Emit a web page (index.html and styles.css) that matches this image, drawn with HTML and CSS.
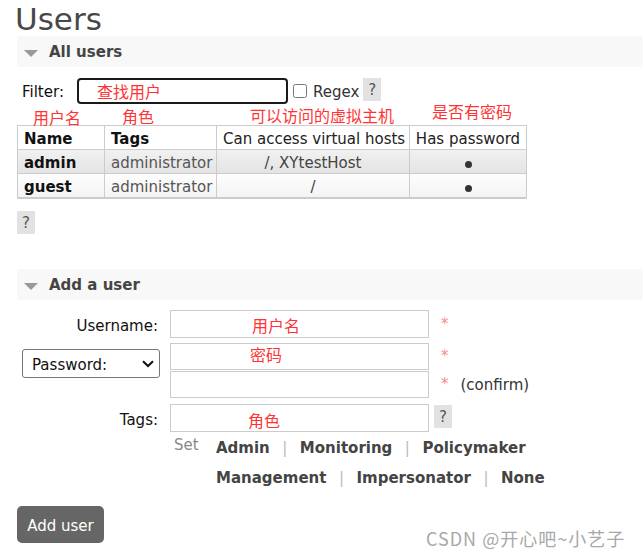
FILE: index.html
```html
<!DOCTYPE html>
<html>
<head>
<meta charset="utf-8">
<title>Users</title>
<link rel="stylesheet" href="styles.css">
</head>
<body>
<div class="page">
  <h1 class="title">Users</h1>

  <section class="section">
    <h2 class="section-head"><span class="tri"></span>All users</h2>
    <div class="filter-row">
      <span class="filter-label">Filter:</span>
      <input class="filter-input" type="text">
      <input class="check" type="checkbox">
      <span class="regex">Regex</span>
      <span class="help help-filter">?</span>
    </div>

    <table class="list">
      <colgroup>
        <col class="col-name"><col class="col-tags"><col class="col-vhosts"><col class="col-pass">
      </colgroup>
      <thead>
        <tr>
          <th class="strong">Name</th>
          <th class="strong">Tags</th>
          <th>Can access virtual hosts</th>
          <th class="center tight">Has password</th>
        </tr>
      </thead>
      <tbody>
        <tr class="row-odd">
          <td class="strong">admin</td>
          <td class="tags">administrator</td>
          <td class="center muted">/, XYtestHost</td>
          <td class="center"><span class="dot"></span></td>
        </tr>
        <tr class="row-even">
          <td class="strong">guest</td>
          <td class="tags">administrator</td>
          <td class="center muted">/</td>
          <td class="center"><span class="dot"></span></td>
        </tr>
      </tbody>
    </table>
    <div class="help-line"><span class="help">?</span></div>
  </section>

  <section class="section section-add">
    <h2 class="section-head"><span class="tri"></span>Add a user</h2>
    <div class="form">
      <div class="form-row">
        <label class="form-label">Username:</label>
        <input class="field" type="text">
        <span class="req">*</span>
      </div>

      <div class="form-row row-pass">
        <div class="form-label select-cell">
          <div class="select-wrap">
            <select class="select"><option>Password:</option></select>
            <svg class="chev" width="12" height="8" viewBox="0 0 12 8"><path d="M1 1.2 L6 6 L11 1.2" fill="none" stroke="#111" stroke-width="2"/></svg>
          </div>
        </div>
        <div class="stack">
          <input class="field field-pw" type="password">
          <input class="field field-pw" type="password">
        </div>
        <div class="stack-extra">
          <div class="extra-line"><span class="req">*</span></div>
          <div class="extra-line"><span class="req">*</span><span class="confirm">(confirm)</span></div>
        </div>
      </div>

      <div class="form-row row-tags">
        <label class="form-label">Tags:</label>
        <input class="field" type="text">
        <span class="help help-tags">?</span>
      </div>

      <div class="form-row row-links">
        <div class="links-spacer"></div>
        <span class="set">Set</span>
        <div class="links">
          <div class="links-line"><span class="tag-link">Admin</span><span class="sep">|</span><span class="tag-link">Monitoring</span><span class="sep">|</span><span class="tag-link">Policymaker</span></div>
          <div class="links-line"><span class="tag-link">Management</span><span class="sep">|</span><span class="tag-link">Impersonator</span><span class="sep">|</span><span class="tag-link">None</span></div>
        </div>
      </div>
    </div>
  </section>

  <button class="add-btn" type="button">Add user</button>

  <span class="note note-filter">查找用户</span>
  <span class="note note-name">用户名</span>
  <span class="note note-tags">角色</span>
  <span class="note note-vhosts">可以访问的虚拟主机</span>
  <span class="note note-pass">是否有密码</span>
  <span class="note note-username">用户名</span>
  <span class="note note-password">密码</span>
  <span class="note note-role">角色</span>

  <span class="watermark">CSDN @开心吧~小艺子</span>
</div>
</body>
</html>
```

FILE: styles.css
```css
* { box-sizing: border-box; }

html, body {
  margin: 0;
  padding: 0;
  background: #fff;
}

body {
  font-family: "DejaVu Sans", "Noto Sans CJK SC", sans-serif;
  font-size: 15px;
  color: #111;
  width: 643px;
  height: 558px;
  overflow: hidden;
}

.page {
  position: relative;
  padding: 0 0 0 17px;
  height: 558px;
}

.title {
  margin: 0 0 1px -2px;
  padding-top: 3px;
  font-size: 31px;
  line-height: 32px;
  font-weight: normal;
  color: #484848;
}

.section-head {
  margin: 0;
  height: 31px;
  padding-top: 2px;
  line-height: 29px;
  background: #f8f8f8;
  font-size: 15px;
  font-weight: bold;
  color: #444;
  display: flex;
  align-items: center;
}

.tri {
  width: 0;
  height: 0;
  border-left: 7px solid transparent;
  border-right: 7px solid transparent;
  border-top: 7px solid #999;
  margin: 1px 11px 0 7px;
}

.filter-row {
  margin-top: 11px;
  height: 26px;
  padding-left: 5px;
  display: flex;
  align-items: center;
}

.filter-label {
  width: 55px;
  padding-top: 2px;
  color: #111;
}

.filter-input {
  width: 211px;
  height: 26px;
  border: 2px solid #1a1a1a;
  border-radius: 4px;
  margin: 0;
  padding: 0;
  outline: none;
}

.check {
  width: 14px;
  height: 14px;
  margin: 0 0 1px 5px;
}

.regex {
  margin-left: 6px;
  padding-top: 2px;
  color: #333;
}

.help {
  display: inline-block;
  width: 18px;
  height: 23px;
  padding-top: 1px;
  line-height: 22px;
  text-align: center;
  background: #e2e2e2;
  color: #555;
  font-size: 15px;
}

.help-filter {
  margin-left: 4px;
  align-self: flex-start;
}

.list {
  margin-top: 21px;
  border-collapse: collapse;
  table-layout: fixed;
  width: 509px;
  border-bottom: 2px solid #ccc;
}

.col-name { width: 87px; }
.col-tags { width: 112px; }
.col-vhosts { width: 193px; }
.col-pass { width: 117px; }

.list th,
.list td {
  border: 1px solid #ccc;
  padding: 3px 6px 0;
  height: 24px;
  line-height: 20px;
  white-space: nowrap;
  text-align: left;
  vertical-align: top;
  font-weight: normal;
  color: #222;
  overflow: hidden;
}

.list th.strong,
.list td.strong {
  font-weight: bold;
  color: #111;
}

.list .center { text-align: center; }
.list .tight { padding-left: 1px; padding-right: 1px; }
.list td.tags { color: #555; }
.list td.muted { color: #444; }

.list thead tr { background: #fff; }
.row-odd { background: linear-gradient(#f1f1f1, #e3e3e3); }
.row-even { background: linear-gradient(#fdfdfd, #f3f3f3); }

.dot {
  display: inline-block;
  width: 7px;
  height: 7px;
  border-radius: 50%;
  background: #333;
}

.help-line {
  margin-top: 12px;
  height: 23px;
}

.section-add {
  margin-top: 35px;
}

.form {
  margin-top: 10px;
  padding-left: 5px;
}

.form-row {
  display: flex;
  align-items: flex-start;
}

.form-label {
  width: 138px;
  flex: none;
  text-align: right;
  padding-right: 2px;
  padding-top: 4px;
  line-height: 24px;
  color: #111;
}

.field {
  width: 259px;
  height: 28px;
  margin: 0 0 0 10px;
  padding: 0;
  border: 1px solid #ccc;
  background: #fff;
  outline: none;
  flex: none;
}

.req {
  color: #f88;
  margin-left: 12px;
  line-height: 28px;
}

.row-pass {
  margin-top: 5px;
}

.select-cell {
  padding-right: 0;
  padding-top: 6px;
  line-height: normal;
}

.select-wrap {
  position: relative;
  width: 138px;
  height: 29px;
}

.select {
  appearance: none;
  -webkit-appearance: none;
  width: 138px;
  height: 29px;
  margin: 0;
  padding: 2px 0 0 9px;
  border: 1px solid #767676;
  border-radius: 3px;
  background: #fff;
  font-family: "DejaVu Sans", sans-serif;
  font-size: 15px;
  color: #111;
  text-align: left;
}

.chev {
  position: absolute;
  right: 6px;
  top: 11px;
}

.stack {
  display: flex;
  flex-direction: column;
  gap: 1px;
}

.field-pw {
  height: 27px;
}

.stack-extra {
  display: flex;
  flex-direction: column;
  gap: 1px;
}

.extra-line {
  height: 27px;
  line-height: 27px;
  display: flex;
}

.extra-line .req {
  line-height: 27px;
}

.confirm {
  margin-left: 12px;
  padding-top: 2px;
  line-height: 25px;
  color: #333;
}

.row-tags {
  margin-top: 6px;
}

.help-tags {
  margin: 1px 0 0 5px;
}

.row-links {
  align-items: flex-start;
}

.links-spacer {
  width: 148px;
  flex: none;
}

.set {
  margin: 0 0 0 4px;
  line-height: 24px;
  padding-top: 1px;
  color: #888;
  width: 42px;
  flex: none;
}

.links {
  font-weight: bold;
  color: #444;
}

.links-line {
  height: 30px;
  padding-top: 2px;
  line-height: 28px;
  white-space: nowrap;
}

.sep {
  display: inline-block;
  padding: 0 12.5px;
  font-weight: normal;
  color: #b8bcc4;
}

.add-btn {
  display: block;
  margin-top: 14px;
  width: 87px;
  height: 37px;
  padding: 2px 0 0;
  border: none;
  border-radius: 5px;
  background: #666;
  color: #fff;
  font-family: "DejaVu Sans", sans-serif;
  font-size: 15px;
}

.note {
  position: absolute;
  font-family: "Noto Sans CJK SC", sans-serif;
  font-size: 16px;
  line-height: 16px;
  color: #f33;
  white-space: nowrap;
}

.note-filter { left: 97px; top: 83px; }
.note-name { left: 33px; top: 109px; }
.note-tags { left: 122px; top: 108px; }
.note-vhosts { left: 250px; top: 107px; }
.note-pass { left: 432px; top: 103px; }
.note-username { left: 252px; top: 317px; }
.note-password { left: 250px; top: 346px; }
.note-role { left: 248px; top: 412px; }

.watermark {
  position: absolute;
  left: 426px;
  top: 528px;
  font-family: "Noto Sans CJK SC", sans-serif;
  font-size: 18px;
  line-height: 20px;
  letter-spacing: 1px;
  color: #a8a8a8;
  white-space: nowrap;
}
```
